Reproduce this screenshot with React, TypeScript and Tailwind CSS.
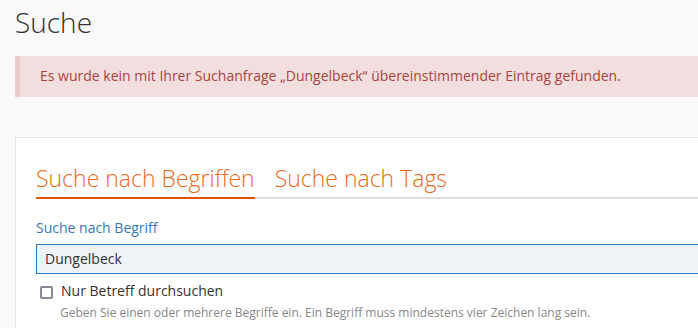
import React from "react";

export default function App() {
  return (
    <div
      className="w-[698px] h-[328px] overflow-hidden bg-[#f9f9f9] text-[#333]"
      style={{ fontFamily: '"Open Sans", "Noto Sans", sans-serif' }}
    >
      <div className="w-[760px] pl-[15px]">
        <h1 className="pt-[2px] h-[42px] text-[28px] leading-[40px] font-light text-[#333]">
          Suche
        </h1>
        <div className="mt-[14px] h-[41px] bg-[#f2dede] border-l-[5px] border-[#ebcccc] pl-[20px] pt-[10px] text-[14px] leading-[20px] text-[#a94442]">
          Es wurde kein mit Ihrer Suchanfrage „Dungelbeck“ übereinstimmender Eintrag gefunden.
        </div>
        <div className="mt-[40px] bg-white border border-[#e6e6e6] pl-[20px] pt-[24px] h-[260px]">
          <div className="flex border-b-2 border-[#dddddd] gap-[20px]">
            <div className="-mb-[2px] border-b-2 border-[#e35205] pb-[3px] text-[23px] leading-[32px] font-light text-[#ee6a1f]">
              Suche nach Begriffen
            </div>
            <div className="pb-[3px] text-[23px] leading-[32px] font-light text-[#ee6a1f]">
              Suche nach Tags
            </div>
          </div>
          <div className="mt-[19px] text-[14px] leading-[20px] text-[#337ab7]">
            Suche nach Begriff
          </div>
          <div className="mt-[6px] h-[30px] border border-[#2b7dc6] bg-[#eef3f8] pl-[8px] text-[14px] leading-[28px] text-[#333]">
            Dungelbeck
          </div>
          <label className="mt-[7px] flex items-center text-[14px] leading-[20px] text-[#333]">
            <span className="ml-[4px] mt-[2px] w-[13px] h-[13px] border-2 border-[#8a8a96] rounded-[2px] bg-white" />
            <span className="ml-[8px]">Nur Betreff durchsuchen</span>
          </label>
          <div className="mt-[3px] pl-[24px] text-[12px] leading-[17px] text-[#888]">
            Geben Sie einen oder mehrere Begriffe ein. Ein Begriff muss mindestens vier Zeichen lang sein.
          </div>
        </div>
      </div>
    </div>
  );
}
